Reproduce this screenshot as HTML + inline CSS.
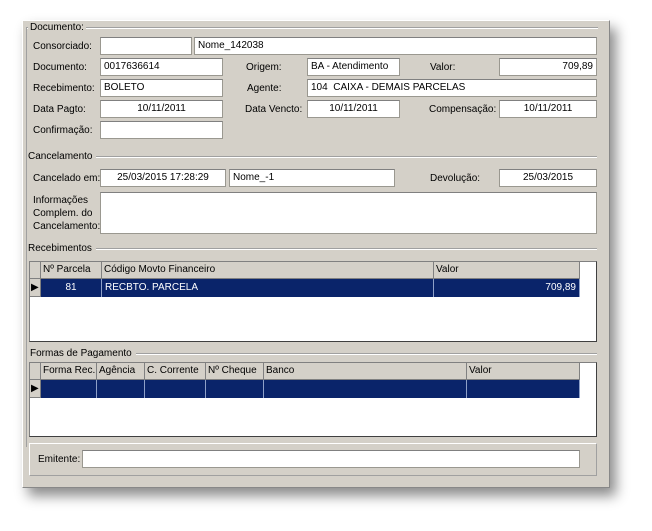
<!DOCTYPE html>
<html><head><meta charset="utf-8"><style>
*{box-sizing:border-box;margin:0;padding:0}
body{width:652px;height:531px;background:#fff;position:relative;overflow:hidden;font-family:"Liberation Sans",Tahoma,sans-serif;font-size:10px;color:#000}
.a{position:absolute}
#panel{left:22px;top:20px;width:588px;height:468px;background:#d4d0c8;border:1px solid #fff;border-right-color:#888;border-bottom-color:#888;box-shadow:6px 8px 12px rgba(0,0,0,.45)}
.l{position:absolute;white-space:nowrap;line-height:13px}
.hd{background:#d4d0c8;padding-right:4px}
.b{position:absolute;background:#fff;border:1px solid #9a9890;border-top-color:#808080;height:18px;line-height:16px;padding:0 3px;white-space:nowrap;overflow:hidden}
.c{text-align:center}.r{text-align:right}
.gl{position:absolute;height:2px;border-top:1px solid #a0a0a0;border-bottom:1px solid #fff}
.grid{position:absolute;background:#fff;border:1px solid #404040;border-top-color:#808080;border-left-color:#808080}
.h{position:absolute;top:0;height:17px;background:#d4d0c8;border-right:1px solid #808080;border-bottom:1px solid #808080;line-height:16px;padding-left:2px;white-space:nowrap;overflow:hidden}
.s{position:absolute;height:18px;background:#0a246a;color:#fff;border-right:1px solid #8ea0c8;line-height:17px;white-space:nowrap;padding:0 3px}
.ind{position:absolute;left:0;width:11px;background:#d4d0c8;border-right:1px solid #808080;border-bottom:1px solid #808080}
</style></head><body>
<div id="panel" class="a"></div>
<div class="gl" style="left:26px;top:27px;width:572px"></div>
<div class="a" style="left:26px;top:27px;width:1px;height:420px;border-left:1px solid #a0a0a0"></div>
<div class="l" style="left:28px;top:21px;background:#d4d0c8;padding:0 2px">Documento:</div>

<div class="l" style="left:33px;top:40px">Consorciado:</div>
<div class="b" style="left:100px;top:37px;width:92px"></div>
<div class="b" style="left:194px;top:37px;width:403px">Nome_142038</div>

<div class="l" style="left:33px;top:61px">Documento:</div>
<div class="b" style="left:100px;top:58px;width:123px">0017636614</div>
<div class="l" style="left:246px;top:61px">Origem:</div>
<div class="b" style="left:307px;top:58px;width:93px">BA - Atendimento</div>
<div class="l" style="left:430px;top:61px">Valor:</div>
<div class="b r" style="left:499px;top:58px;width:98px">709,89</div>

<div class="l" style="left:33px;top:82px">Recebimento:</div>
<div class="b" style="left:100px;top:79px;width:123px">BOLETO</div>
<div class="l" style="left:247px;top:82px">Agente:</div>
<div class="b" style="left:307px;top:79px;width:290px">104&nbsp; CAIXA - DEMAIS PARCELAS</div>

<div class="l" style="left:33px;top:103px">Data Pagto:</div>
<div class="b c" style="left:100px;top:100px;width:123px">10/11/2011</div>
<div class="l" style="left:245px;top:103px">Data Vencto:</div>
<div class="b c" style="left:307px;top:100px;width:93px">10/11/2011</div>
<div class="l" style="left:429px;top:103px">Compensação:</div>
<div class="b c" style="left:499px;top:100px;width:98px">10/11/2011</div>

<div class="l" style="left:33px;top:124px">Confirmação:</div>
<div class="b" style="left:100px;top:121px;width:123px"></div>

<div class="gl" style="left:28px;top:156px;width:569px"></div>
<div class="l hd" style="left:28px;top:150px">Cancelamento</div>

<div class="l" style="left:33px;top:172px">Cancelado em:</div>
<div class="b c" style="left:100px;top:169px;width:126px">25/03/2015 17:28:29</div>
<div class="b" style="left:229px;top:169px;width:166px">Nome_-1</div>
<div class="l" style="left:430px;top:172px">Devolução:</div>
<div class="b c" style="left:499px;top:169px;width:98px">25/03/2015</div>

<div class="l" style="left:33px;top:194px;line-height:13px">Informações<br>Complem. do<br>Cancelamento:</div>
<div class="b" style="left:100px;top:192px;width:497px;height:42px"></div>

<div class="gl" style="left:28px;top:248px;width:569px"></div>
<div class="l hd" style="left:28px;top:242px">Recebimentos</div>

<div class="grid" style="left:29px;top:261px;width:568px;height:81px">
 <div class="ind" style="top:0;height:17px"></div>
 <div class="h" style="left:11px;width:61px">Nº Parcela</div>
 <div class="h" style="left:72px;width:332px">Código Movto Financeiro</div>
 <div class="h" style="left:404px;width:146px">Valor</div>
 <div class="ind" style="top:17px;height:18px;font-size:10px;line-height:17px;padding-left:1px">&#9654;</div>
 <div class="s c" style="left:11px;top:17px;width:61px">81</div>
 <div class="s" style="left:72px;top:17px;width:332px">RECBTO. PARCELA</div>
 <div class="s r" style="left:404px;top:17px;width:146px">709,89</div>
</div>

<div class="gl" style="left:30px;top:353px;width:567px"></div>
<div class="l hd" style="left:30px;top:347px">Formas de Pagamento</div>

<div class="grid" style="left:29px;top:362px;width:568px;height:75px">
 <div class="ind" style="top:0;height:17px"></div>
 <div class="h" style="left:11px;width:56px">Forma Rec.</div>
 <div class="h" style="left:67px;width:48px">Agência</div>
 <div class="h" style="left:115px;width:61px">C. Corrente</div>
 <div class="h" style="left:176px;width:58px">Nº Cheque</div>
 <div class="h" style="left:234px;width:203px">Banco</div>
 <div class="h" style="left:437px;width:113px">Valor</div>
 <div class="ind" style="top:17px;height:18px;font-size:10px;line-height:17px;padding-left:1px">&#9654;</div>
 <div class="s" style="left:11px;top:17px;width:56px"></div>
 <div class="s" style="left:67px;top:17px;width:48px"></div>
 <div class="s" style="left:115px;top:17px;width:61px"></div>
 <div class="s" style="left:176px;top:17px;width:58px"></div>
 <div class="s" style="left:234px;top:17px;width:203px"></div>
 <div class="s" style="left:437px;top:17px;width:113px"></div>
</div>

<div class="a" style="left:29px;top:443px;width:568px;height:33px;border:1px solid #fff;border-right-color:#a0a0a0;border-bottom-color:#a0a0a0"></div>
<div class="l" style="left:38px;top:453px">Emitente:</div>
<div class="b" style="left:82px;top:450px;width:498px"></div>
</body></html>
